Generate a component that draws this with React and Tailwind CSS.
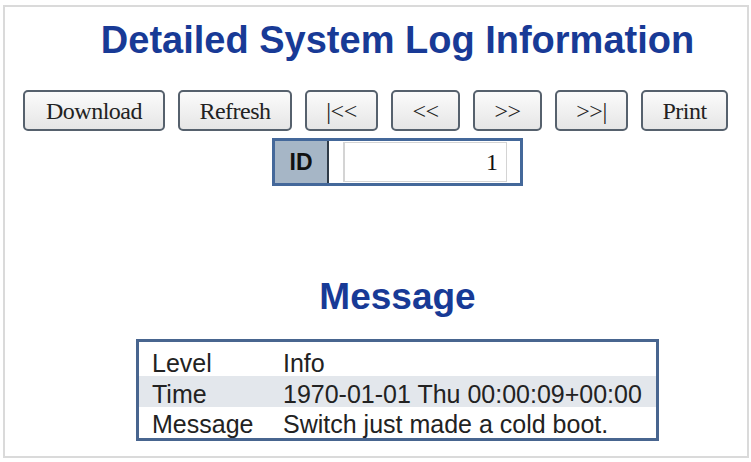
const BUTTONS = [
  { label: 'Download', w: 'w-[142px]' },
  { label: 'Refresh', w: 'w-[114px]' },
  { label: '|<<', w: 'w-[73px]' },
  { label: '<<', w: 'w-[69px]' },
  { label: '>>', w: 'w-[69px]' },
  { label: '>>|', w: 'w-[73px]' },
  { label: 'Print', w: 'w-[87px]' },
];

const ROWS = [
  { key: 'Level', value: 'Info', bg: 'bg-white', h: 'h-[34px]', pt: 'pt-[9px]' },
  { key: 'Time', value: '1970-01-01 Thu 00:00:09+00:00', bg: 'bg-[#e3e7ec]', h: 'h-[31px]', pt: 'pt-[6px]' },
  { key: 'Message', value: 'Switch just made a cold boot.', bg: 'bg-white', h: 'h-[31px]', pt: 'pt-[5px]' },
];

const App = () => {
  return (
    <div className="w-[751px] h-[462px] bg-white pt-[5px] pl-[3px]">
      <div className="w-[746px] h-[453px] border-2 border-[#dadada] flex flex-col">
        {/* page title */}
        <h1 className="mt-[11px] pl-[43px] text-center text-[38px] leading-[44px] font-bold text-[#183a96] font-['Liberation_Sans',Arial,sans-serif]">
          Detailed System Log Information
        </h1>

        {/* toolbar */}
        <div className="mt-[28px] pl-[18px] flex gap-[13px]">
          {BUTTONS.map((b) => (
            <button
              key={b.label}
              type="button"
              className={`${b.w} h-[41px] rounded-[5px] border-2 border-[#56616d] bg-gradient-to-b from-[#fbfbfb] to-[#e6e6e6] text-[24px] leading-none tracking-[-0.5px] text-[#222] font-['Liberation_Serif','Times_New_Roman',serif]`}
            >
              {b.label}
            </button>
          ))}
        </div>

        {/* ID selector */}
        <div className="mt-[7px] pl-[43px] flex justify-center">
          <div className="w-[251px] h-[48px] border-[3px] border-[#44689a] flex">
            <div className="w-[54px] bg-[#a6b6c6] border-r-2 border-[#2f3b48] flex items-center justify-center text-[23px] font-bold text-[#111] font-['Liberation_Sans',Arial,sans-serif]">
              ID
            </div>
            <div className="flex-1 bg-white flex items-center pl-[14px] pr-[13px]">
              <input
                readOnly
                value="1"
                className="w-full h-[40px] border border-l-2 border-[#d4d4d4] text-right pr-[8px] text-[24px] text-[#111] outline-none font-['Liberation_Serif','Times_New_Roman',serif]"
              />
            </div>
          </div>
        </div>

        {/* message heading */}
        <h2 className="mt-[91px] pl-[43px] text-center text-[37px] leading-[40px] font-bold text-[#183a96] font-['Liberation_Sans',Arial,sans-serif]">
          Message
        </h2>

        <div className="mt-[22px] pl-[43px] flex justify-center">
          <div className="w-[523px] border-[3px] border-[#48658f] font-['Liberation_Sans',Arial,sans-serif] text-[25px] leading-[24px] text-[#222]">
            {ROWS.map((r) => (
              <div key={r.key} className={`${r.bg} ${r.h} ${r.pt} flex`}>
                <div className="w-[144px] pl-[13px]">{r.key}</div>
                <div className="flex-1 whitespace-nowrap">{r.value}</div>
              </div>
            ))}
          </div>
        </div>
      </div>
    </div>
  );
};

export default App;
